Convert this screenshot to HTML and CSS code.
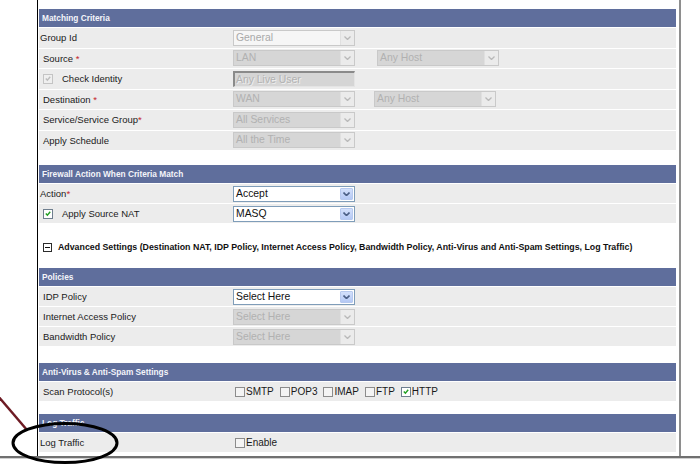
FILE: index.html
```html
<!DOCTYPE html>
<html>
<head>
<meta charset="utf-8">
<link rel="stylesheet" href="styles.css">
</head>
<body>
<div class="frame">
  <section class="sec">
    <div class="hdr">Matching Criteria</div>
    <div class="row r-mc"><div class="lbl tight">Group Id</div><div class="ctl">
      <div class="sel dis light"><span class="val">General</span><span class="arr"><svg viewBox="0 0 7 4"><path d="M0.5 0.5L3.5 3.5L6.5 0.5"/></svg></span></div>
    </div></div>
    <div class="row r-mc"><div class="lbl">Source <span class="req">*</span></div><div class="ctl">
      <div class="sel dis"><span class="val">LAN</span><span class="arr"><svg viewBox="0 0 7 4"><path d="M0.5 0.5L3.5 3.5L6.5 0.5"/></svg></span></div>
      <div class="sel dis host1"><span class="val">Any Host</span><span class="arr"><svg viewBox="0 0 7 4"><path d="M0.5 0.5L3.5 3.5L6.5 0.5"/></svg></span></div>
    </div></div>
    <div class="row r-mc"><div class="lbl cbl"><span class="cb cb-dis"><svg viewBox="0 0 9 9"><path d="M2 4.5L3.8 6.3L7 2.5"/></svg></span><span class="cb-text">Check Identity</span></div><div class="ctl">
      <div class="txt dis">Any Live User</div>
    </div></div>
    <div class="row r-mc"><div class="lbl">Destination <span class="req">*</span></div><div class="ctl">
      <div class="sel dis"><span class="val">WAN</span><span class="arr"><svg viewBox="0 0 7 4"><path d="M0.5 0.5L3.5 3.5L6.5 0.5"/></svg></span></div>
      <div class="sel dis host2"><span class="val">Any Host</span><span class="arr"><svg viewBox="0 0 7 4"><path d="M0.5 0.5L3.5 3.5L6.5 0.5"/></svg></span></div>
    </div></div>
    <div class="row r-mc"><div class="lbl">Service/Service Group<span class="req">*</span></div><div class="ctl">
      <div class="sel dis"><span class="val">All Services</span><span class="arr"><svg viewBox="0 0 7 4"><path d="M0.5 0.5L3.5 3.5L6.5 0.5"/></svg></span></div>
    </div></div>
    <div class="row r-mc"><div class="lbl">Apply Schedule</div><div class="ctl">
      <div class="sel dis"><span class="val">All the Time</span><span class="arr"><svg viewBox="0 0 7 4"><path d="M0.5 0.5L3.5 3.5L6.5 0.5"/></svg></span></div>
    </div></div>
  </section>

  <section class="sec sec-fw">
    <div class="hdr">Firewall Action When Criteria Match</div>
    <div class="row"><div class="lbl tight">Action<span class="req">*</span></div><div class="ctl">
      <div class="sel on"><span class="val">Accept</span><span class="arr"><svg viewBox="0 0 7 4"><path d="M0.5 0.5L3.5 3.5L6.5 0.5"/></svg></span></div>
    </div></div>
    <div class="row"><div class="lbl cbl"><span class="cb cb-on"><svg viewBox="0 0 9 9"><path d="M2 4.5L3.8 6.3L7 2.5"/></svg></span><span class="cb-text">Apply Source NAT</span></div><div class="ctl">
      <div class="sel on"><span class="val">MASQ</span><span class="arr"><svg viewBox="0 0 7 4"><path d="M0.5 0.5L3.5 3.5L6.5 0.5"/></svg></span></div>
    </div></div>
  </section>

  <div class="adv">
    <span class="minus"></span>
    <span class="adv-text">Advanced Settings (Destination NAT, IDP Policy, Internet Access Policy, Bandwidth Policy, Anti-Virus and Anti-Spam Settings, Log Traffic)</span>
  </div>

  <section class="sec">
    <div class="hdr">Policies</div>
    <div class="row"><div class="lbl">IDP Policy</div><div class="ctl">
      <div class="sel on"><span class="val">Select Here</span><span class="arr"><svg viewBox="0 0 7 4"><path d="M0.5 0.5L3.5 3.5L6.5 0.5"/></svg></span></div>
    </div></div>
    <div class="row"><div class="lbl">Internet Access Policy</div><div class="ctl">
      <div class="sel dis"><span class="val">Select Here</span><span class="arr"><svg viewBox="0 0 7 4"><path d="M0.5 0.5L3.5 3.5L6.5 0.5"/></svg></span></div>
    </div></div>
    <div class="row"><div class="lbl">Bandwidth Policy</div><div class="ctl">
      <div class="sel dis"><span class="val">Select Here</span><span class="arr"><svg viewBox="0 0 7 4"><path d="M0.5 0.5L3.5 3.5L6.5 0.5"/></svg></span></div>
    </div></div>
  </section>

  <section class="sec sec-av">
    <div class="hdr">Anti-Virus &amp; Anti-Spam Settings</div>
    <div class="row"><div class="lbl">Scan Protocol(s)</div><div class="ctl protos">
      <span class="opt"><span class="cb"></span>SMTP</span>
      <span class="opt"><span class="cb"></span>POP3</span>
      <span class="opt"><span class="cb"></span>IMAP</span>
      <span class="opt"><span class="cb"></span>FTP</span>
      <span class="opt"><span class="cb cb-on"><svg viewBox="0 0 9 9"><path d="M2 4.5L3.8 6.3L7 2.5"/></svg></span>HTTP</span>
    </div></div>
  </section>

  <section class="sec sec-log">
    <div class="hdr">Log Traffic</div>
    <div class="row"><div class="lbl tight">Log Traffic</div><div class="ctl protos">
      <span class="opt"><span class="cb"></span>Enable</span>
    </div></div>
  </section>
</div>
<div class="bottom-bar"></div>

<svg class="annot" viewBox="0 0 700 466" width="700" height="466">
  <line x1="-2" y1="396" x2="27" y2="430" stroke="#6e1b24" stroke-width="2.5"/>
  <ellipse cx="65" cy="443" rx="52" ry="19.5" fill="none" stroke="#000" stroke-width="3"/>
</svg>
</body>
</html>
```

FILE: styles.css
```css
html, body {
  margin: 0;
  padding: 0;
}
body {
  width: 700px;
  height: 466px;
  overflow: hidden;
  position: relative;
  background: #fff;
  font-family: "Liberation Sans", Arial, sans-serif;
  font-size: 9.5px;
  color: #1a1a1a;
}

.frame {
  margin-left: 37px;
  width: 644px;
  height: 456px;
  box-sizing: border-box;
  border-left: 1px solid #000;
  border-right: 2px solid #8e8e8e;
  padding: 9px 3px 0 1px;
}

.bottom-bar {
  height: 2px;
  background: #707070;
  border-bottom: 1px solid #cfcfcf;
}

.hdr {
  height: 18px;
  background: #5f6e9c;
  color: #f4f5fa;
  font-weight: bold;
  font-size: 8.3px;
  line-height: 18px;
  padding-left: 3px;
}

.row {
  display: flex;
  align-items: center;
  height: 20px;
  box-sizing: border-box;
  border-top: 1px solid #fff;
  background: #ececec;
}
.r-mc { height: 20.5px; }

.lbl {
  width: 194px;
  flex: none;
  padding-left: 4px;
  box-sizing: border-box;
  white-space: nowrap;
}
.lbl.cbl {
  display: flex;
  align-items: center;
}
.lbl.tight { padding-left: 1px; }
.req { color: #c4262b; }

.ctl {
  display: flex;
  align-items: center;
}

.sec-fw { margin-top: 15px; }
.sec-av { margin-top: 17px; }
.sec-log { margin-top: 13px; }

/* selects */
.sel {
  width: 122px;
  height: 16px;
  box-sizing: border-box;
  display: flex;
  align-items: stretch;
  font-size: 10.4px;
}
.sel .val {
  flex: 1;
  padding-left: 2px;
  line-height: 14px;
  white-space: nowrap;
  overflow: hidden;
}
.sel .arr {
  width: 14px;
  display: flex;
  align-items: center;
  justify-content: center;
  box-sizing: border-box;
}
.sel .arr svg {
  width: 7px;
  height: 4px;
  fill: none;
  stroke-width: 1.3;
}
.sel.dis {
  border: 1px solid #c9c9c9;
  background: #d6d6d6;
  color: #b1b1b1;
}
.sel.dis.light { background: #f6f6f6; color: #a9a9a9; }
.sel.dis .arr {
  background: #ebebeb;
  border-left: 1px solid #e0e0e0;
}
.sel.dis .arr svg { stroke: #b9b9b9; }
.sel.on {
  border: 1px solid #7f9db9;
  background: #fff;
  color: #111;
}
.sel.on .arr {
  margin: 1px;
  width: 13px;
  background: linear-gradient(#d3e0fb, #b5c9f5);
  border: 1px solid #b7c9ef;
  border-radius: 1px;
}
.sel.on .arr svg { stroke: #4b5f86; stroke-width: 1.6; }

.host1 { margin-left: 22px; }
.host2 { margin-left: 19px; }

.txt {
  width: 122px;
  height: 16px;
  box-sizing: border-box;
  font-size: 10.4px;
  line-height: 14px;
  padding-left: 1px;
  white-space: nowrap;
}
.txt.dis {
  background: #d5d5d5;
  color: #b2b2b2;
  border-top: 2px solid #8a8a8a;
  border-left: 2px solid #8a8a8a;
  border-right: 1px solid #e4e4e4;
  border-bottom: 1px solid #e4e4e4;
  text-shadow: 1px 1px 0 #eee;
}

/* checkboxes */
.cb {
  width: 10px;
  height: 10px;
  box-sizing: border-box;
  border: 1px solid #8c8c8c;
  background: #f4f4f4;
  display: inline-flex;
  align-items: center;
  justify-content: center;
  flex: none;
}
.cb svg {
  width: 9px;
  height: 9px;
  fill: none;
  stroke-width: 1.6;
}
.cb-on { border-color: #6f7f8f; background: #fff; }
.cb-on svg { stroke: #23a024; }
.cb-dis { border-color: #c4c4c4; background: #efefef; }
.cb-dis svg { stroke: #bdbdbd; }
.cb-text { margin-left: 9px; }

.protos {
  padding-left: 2px;
  font-size: 10px;
}
.opt {
  display: inline-flex;
  align-items: center;
  margin-right: 6px;
  white-space: nowrap;
}
.opt .cb { margin-right: 1px; }

/* advanced settings */
.adv {
  height: 45px;
  box-sizing: border-box;
  padding: 3px 0 0 4px;
  display: flex;
  align-items: center;
}
.minus {
  width: 9px;
  height: 9px;
  box-sizing: border-box;
  border: 1px solid #2c2c2c;
  position: relative;
  flex: none;
  background: #fff;
}
.minus::after {
  content: "";
  position: absolute;
  left: 1px;
  right: 1px;
  top: 3px;
  height: 1px;
  background: #111;
}
.adv-text {
  margin-left: 6px;
  font-weight: bold;
  font-size: 8.8px;
  color: #111;
  white-space: nowrap;
}

.annot {
  position: absolute;
  left: 0;
  top: 0;
  pointer-events: none;
}
```
